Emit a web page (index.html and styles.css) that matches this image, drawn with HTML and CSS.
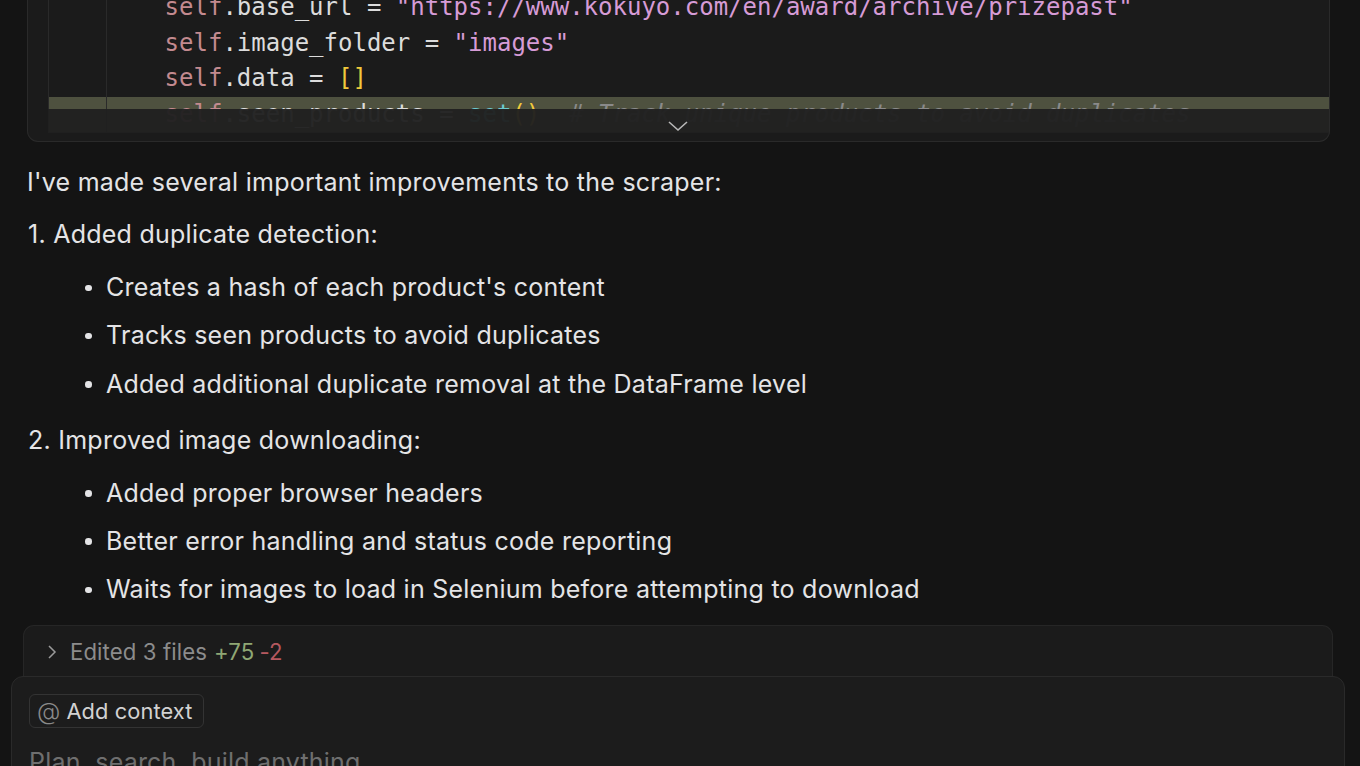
FILE: index.html
```html
<!DOCTYPE html>
<html>
<head>
<meta charset="utf-8">
<link rel="stylesheet" href="styles.css">
</head>
<body>
<div class="code-box">
  <div class="code-area">
    <div class="guide g0"></div>
    <div class="guide g4"></div>
    <div class="line"><span class="ind">        </span><span class="kw">self</span>.base_url = <span class="str">"https://www.kokuyo.com/en/award/archive/prizepast"</span></div>
    <div class="line"><span class="ind">        </span><span class="kw">self</span>.image_folder = <span class="str">"images"</span></div>
    <div class="line"><span class="ind">        </span><span class="kw">self</span>.data = <span class="br">[]</span></div>
    <div class="line hl"><span class="ind">        </span><span class="kw">self</span>.seen_products = <span class="fn">set</span><span class="br">()</span>  <span class="cm"># Track unique products to avoid duplicates</span></div>
    <div class="fade">
      <svg class="chev" width="22" height="12" viewBox="0 0 22 12"><path d="M2 2 L11 10 L20 2" fill="none" stroke="#b8b8b8" stroke-width="1.6"/></svg>
    </div>
  </div>
</div>

<div class="msg">
  <p class="lead">I've made several important improvements to the scraper:</p>
  <div class="item"><span class="num">1.</span> Added duplicate detection:</div>
  <ul class="bul">
    <li>Creates a hash of each product's content</li>
    <li>Tracks seen products to avoid duplicates</li>
    <li>Added additional duplicate removal at the DataFrame level</li>
  </ul>
  <div class="item"><span class="num">2.</span> Improved image downloading:</div>
  <ul class="bul">
    <li>Added proper browser headers</li>
    <li>Better error handling and status code reporting</li>
    <li>Waits for images to load in Selenium before attempting to download</li>
  </ul>
</div>

<div class="edited">
  <svg class="ed-chev" width="10" height="16" viewBox="0 0 10 16"><path d="M2 2 L8 8 L2 14" fill="none" stroke="#9a9a9a" stroke-width="1.5"/></svg>
  <span class="ed-text">Edited 3 files</span>
  <span class="plus">+75</span>
  <span class="minus">-2</span>
</div>

<div class="composer">
  <div class="chip"><span class="at">@</span><span>Add context</span></div>
  <div class="placeholder">Plan, search, build anything</div>
</div>
</body>
</html>
```

FILE: styles.css
```css
html, body {
  margin: 0;
  padding: 0;
  background: #141414;
  height: 766px;
  overflow: hidden;
}
body {
  font-family: Inter, "Noto Sans", sans-serif;
  color: #e4e4e6;
}
.code-box {
  margin-left: 27px;
  width: 1303px;
  height: 152px;
  margin-top: -10px;
  background: #1b1b1b;
  border: 1px solid #2a2a2a;
  border-top: none;
  border-radius: 0 0 11px 11px;
  box-sizing: border-box;
  padding-left: 20px;
}
.code-area {
  position: relative;
  border-left: 1px solid #242424;
  height: 142px;
  font-family: "DejaVu Sans Mono", monospace;
  font-size: 24px;
  color: #dcdcdc;
}
.line {
  height: 35.5px;
  line-height: 35.5px;
  white-space: pre;
  position: relative;
  z-index: 1;
}
.line.hl {
  background: #4e513f;
}
.guide {
  position: absolute;
  top: 0;
  bottom: 0;
  width: 1px;
  background: #2a2a2a;
  z-index: 2;
}
.g0 { left: -1px; }
.g4 { left: 57px; }
.kw { color: #c38a8f; }
.str { color: #d69bd6; }
.br { color: #f1c93b; }
.fn { color: #6ccad0; }
.cm { color: #8a8a8a; font-style: italic; }
.fade {
  position: absolute;
  left: -1px;
  right: 0;
  top: 119px;
  height: 24px;
  background: rgba(32, 32, 32, 0.96);
  z-index: 3;
  display: flex;
  justify-content: center;
}
.chev {
  margin-top: 11px;
  margin-left: -22px;
}
.msg {
  margin-left: 27px;
  font-size: 25px;
  letter-spacing: 0.25px;
  line-height: 30px;
  margin-top: 25px;
}
.lead {
  margin: 0 0 22px 0;
}
.item {
  margin: 0;
  padding-left: 1px;
}
.bul {
  margin: 23px 0 26px 0;
  padding-left: 79px;
  list-style: none;
}
.bul:last-child { margin-bottom: 0; }
.bul li {
  position: relative;
  margin-bottom: 18.3px;
}
.bul li:last-child { margin-bottom: 0; }
.bul li::before {
  content: "";
  position: absolute;
  left: -21px;
  top: 12.5px;
  width: 6.5px;
  height: 6.5px;
  border-radius: 50%;
  background: #e4e4e6;
}
.edited {
  margin-left: 23px;
  width: 1310px;
  height: 51px;
  box-sizing: border-box;
  margin-top: 21px;
  background: #1b1b1b;
  border: 1px solid #262626;
  border-bottom: none;
  border-radius: 11px 11px 0 0;
  display: flex;
  align-items: center;
  padding-left: 23px;
  font-size: 22.2px;
  letter-spacing: 0.1px;
  color: #8c8c8c;
}
.ed-chev { margin-right: 13px; margin-top: 1px; }
.plus { color: #8fa774; margin-left: 7px; }
.minus { color: #b5585f; margin-left: 5px; }
.composer {
  margin-left: 11px;
  width: 1334px;
  height: 120px;
  box-sizing: border-box;
  background: #1c1c1c;
  border: 1px solid #2a2a2a;
  border-radius: 12px 12px 0 0;
  padding: 17px 17px 0 17px;
}
.chip {
  display: inline-flex;
  align-items: center;
  height: 34px;
  box-sizing: border-box;
  border: 1px solid #333333;
  border-radius: 6px;
  padding: 0 11px 0 7px;
  font-size: 21.8px;
  letter-spacing: 0.1px;
  color: #d2d2d2;
  gap: 6px;
}
.at {
  color: #8a8a8a;
  font-size: 24px;
  font-weight: 300;
}
.placeholder {
  margin-top: 19px;
  font-size: 25px;
  letter-spacing: 0.2px;
  color: #6f6f6f;
}
```
